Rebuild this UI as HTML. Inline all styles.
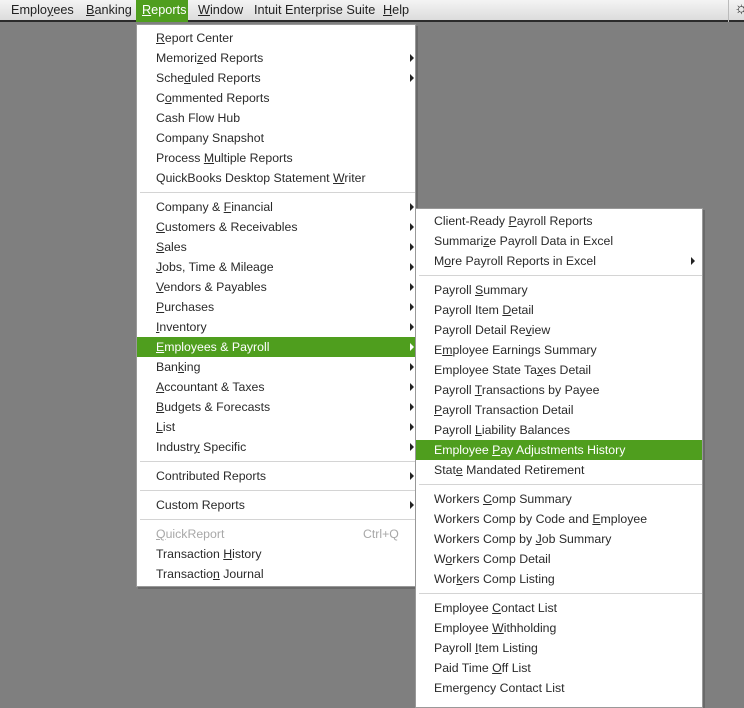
<!DOCTYPE html>
<html><head><style>
*{margin:0;padding:0;box-sizing:border-box}
body{width:744px;height:692px;overflow:hidden;background:#7f7f7f;font-family:"Liberation Sans",sans-serif;font-size:12.3px;color:#2a2a2a;position:relative}
#bar{position:absolute;left:0;top:0;width:744px;height:22px;background:linear-gradient(#f4f4f4,#dcdcdc);border-bottom:2px solid #2b2b2b}
#bar span{position:absolute;top:3px;font-size:12.7px;color:#222}
#bar .act{background:#4f9e1e;color:#fff;top:0;height:22px;width:52px;padding:3px 0 0 6px}
.menu{position:absolute;background:#fff;border:1px solid #999;box-shadow:2px 2px 0 #6a6a6a}
.it{height:20px;line-height:20px;position:relative;white-space:nowrap}
.it.h{background:#4f9e1e;color:#fff}
.it .ar{position:absolute;top:6px;width:0;height:0;border-left:4px solid #222;border-top:4px solid transparent;border-bottom:4px solid transparent}
.it.h .ar{border-left-color:#fff}
.sep{height:9px;position:relative}
.sep:after{content:"";position:absolute;left:3px;right:0;top:4px;border-top:1px solid #d4d4d4}
.dis{color:#a8a8a8}
</style></head><body>
<div id="bar">
<span style="left:11px">Emplo<u>y</u>ees</span>
<span style="left:86px"><u>B</u>anking</span>
<span class="act" style="left:136px"><u>R</u>eports</span>
<span style="left:198px"><u>W</u>indow</span>
<span style="left:254px">Intuit Enterprise Suite</span>
<span style="left:383px"><u>H</u>elp</span>
<div style="position:absolute;left:728px;top:0;width:1px;height:22px;background:#bbb"></div>
<span style="left:734px;top:0;font-size:16px">☼</span>
</div>

<div class="menu" style="left:136px;top:24px;width:280px;height:563px;padding-top:3px">
<div class="it" style="padding-left:19px"><u>R</u>eport Center</div>
<div class="it" style="padding-left:19px">Memori<u>z</u>ed Reports<i class="ar" style="left:273px"></i></div>
<div class="it" style="padding-left:19px">Sche<u>d</u>uled Reports<i class="ar" style="left:273px"></i></div>
<div class="it" style="padding-left:19px">C<u>o</u>mmented Reports</div>
<div class="it" style="padding-left:19px">Cash Flow Hub</div>
<div class="it" style="padding-left:19px">Company Snapshot</div>
<div class="it" style="padding-left:19px">Process <u>M</u>ultiple Reports</div>
<div class="it" style="padding-left:19px">QuickBooks Desktop Statement <u>W</u>riter</div>
<div class="sep"></div>
<div class="it" style="padding-left:19px">Company &amp; <u>F</u>inancial<i class="ar" style="left:273px"></i></div>
<div class="it" style="padding-left:19px"><u>C</u>ustomers &amp; Receivables<i class="ar" style="left:273px"></i></div>
<div class="it" style="padding-left:19px"><u>S</u>ales<i class="ar" style="left:273px"></i></div>
<div class="it" style="padding-left:19px"><u>J</u>obs, Time &amp; Mileage<i class="ar" style="left:273px"></i></div>
<div class="it" style="padding-left:19px"><u>V</u>endors &amp; Payables<i class="ar" style="left:273px"></i></div>
<div class="it" style="padding-left:19px"><u>P</u>urchases<i class="ar" style="left:273px"></i></div>
<div class="it" style="padding-left:19px"><u>I</u>nventory<i class="ar" style="left:273px"></i></div>
<div class="it h" style="padding-left:19px"><u>E</u>mployees &amp; Payroll<i class="ar" style="left:273px"></i></div>
<div class="it" style="padding-left:19px">Ban<u>k</u>ing<i class="ar" style="left:273px"></i></div>
<div class="it" style="padding-left:19px"><u>A</u>ccountant &amp; Taxes<i class="ar" style="left:273px"></i></div>
<div class="it" style="padding-left:19px"><u>B</u>udgets &amp; Forecasts<i class="ar" style="left:273px"></i></div>
<div class="it" style="padding-left:19px"><u>L</u>ist<i class="ar" style="left:273px"></i></div>
<div class="it" style="padding-left:19px">Industr<u>y</u> Specific<i class="ar" style="left:273px"></i></div>
<div class="sep"></div>
<div class="it" style="padding-left:19px">Contributed Reports<i class="ar" style="left:273px"></i></div>
<div class="sep"></div>
<div class="it" style="padding-left:19px">Custom Reports<i class="ar" style="left:273px"></i></div>
<div class="sep"></div>
<div class="it dis" style="padding-left:19px"><u>Q</u>uickReport<span style="position:absolute;left:226px">Ctrl+Q</span></div>
<div class="it" style="padding-left:19px">Transaction <u>H</u>istory</div>
<div class="it" style="padding-left:19px">Transactio<u>n</u> Journal</div>
</div>

<div class="menu" style="left:415px;top:208px;width:288px;height:500px;padding-top:2px">
<div class="it" style="padding-left:18px">Client-Ready <u>P</u>ayroll Reports</div>
<div class="it" style="padding-left:18px">Summari<u>z</u>e Payroll Data in Excel</div>
<div class="it" style="padding-left:18px">M<u>o</u>re Payroll Reports in Excel<i class="ar" style="left:275px"></i></div>
<div class="sep"></div>
<div class="it" style="padding-left:18px">Payroll <u>S</u>ummary</div>
<div class="it" style="padding-left:18px">Payroll Item <u>D</u>etail</div>
<div class="it" style="padding-left:18px">Payroll Detail Re<u>v</u>iew</div>
<div class="it" style="padding-left:18px">E<u>m</u>ployee Earnings Summary</div>
<div class="it" style="padding-left:18px">Employee State Ta<u>x</u>es Detail</div>
<div class="it" style="padding-left:18px">Payroll <u>T</u>ransactions by Payee</div>
<div class="it" style="padding-left:18px"><u>P</u>ayroll Transaction Detail</div>
<div class="it" style="padding-left:18px">Payroll <u>L</u>iability Balances</div>
<div class="it h" style="padding-left:18px">Employee <u>P</u>ay Adjustments History</div>
<div class="it" style="padding-left:18px">Stat<u>e</u> Mandated Retirement</div>
<div class="sep"></div>
<div class="it" style="padding-left:18px">Workers <u>C</u>omp Summary</div>
<div class="it" style="padding-left:18px">Workers Comp by Code and <u>E</u>mployee</div>
<div class="it" style="padding-left:18px">Workers Comp by <u>J</u>ob Summary</div>
<div class="it" style="padding-left:18px">W<u>o</u>rkers Comp Detail</div>
<div class="it" style="padding-left:18px">Wor<u>k</u>ers Comp Listing</div>
<div class="sep"></div>
<div class="it" style="padding-left:18px">Employee <u>C</u>ontact List</div>
<div class="it" style="padding-left:18px">Employee <u>W</u>ithholding</div>
<div class="it" style="padding-left:18px">Payroll <u>I</u>tem Listing</div>
<div class="it" style="padding-left:18px">Paid Time <u>O</u>ff List</div>
<div class="it" style="padding-left:18px">Emergency Contact List</div>
</div>
</body></html>
